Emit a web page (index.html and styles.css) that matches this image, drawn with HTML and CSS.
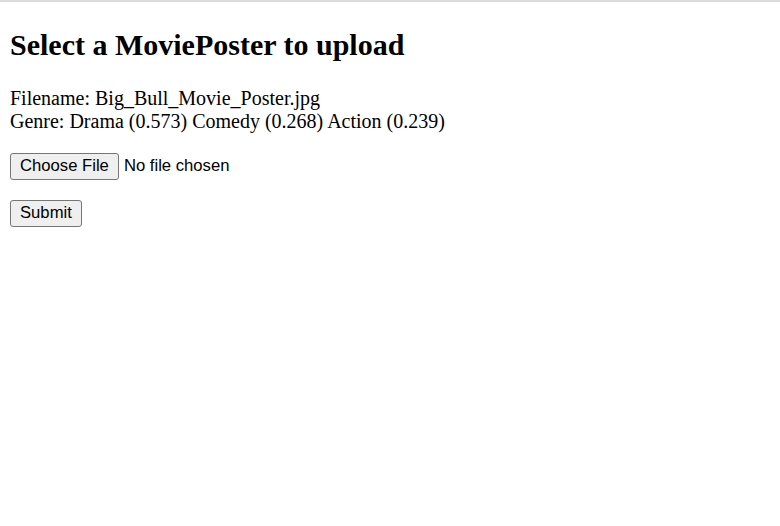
FILE: index.html
```html
<!DOCTYPE html>
<html lang="en">
<head>
<meta charset="utf-8">
<title>Upload MoviePoster</title>
<link rel="stylesheet" href="styles.css">
</head>
<body>
<div class="topline"></div>
<main class="page">
  <h2 class="title">Select a MoviePoster to upload</h2>
  <p class="result">Filename: Big_Bull_Movie_Poster.jpg<br>Genre: Drama (0.573) Comedy (0.268) Action (0.239)</p>
  <form class="form">
    <div class="file-row">
      <button type="button" class="btn">Choose File</button>
      <span class="file-name">No file chosen</span>
    </div>
    <div class="submit-row">
      <button type="submit" class="btn">Submit</button>
    </div>
  </form>
</main>
</body>
</html>
```
FILE: styles.css
```css
html, body {
  margin: 0;
  padding: 0;
  background: #ffffff;
}
.topline {
  height: 2px;
  background: #dcdce0;
}
.page {
  padding: 0 10px;
  font-family: "Liberation Serif", "Times New Roman", serif;
  font-size: 20px;
  color: #000;
}
.title {
  font-size: 30px;
  font-weight: bold;
  margin: 25.9px 0 24.9px;
}
.result {
  margin: 24.9px 0 20px;
  line-height: 23px;
}
.form {
  display: flex;
  flex-direction: column;
  align-items: flex-start;
  gap: 20px;
}
.file-row {
  display: flex;
  align-items: center;
  gap: 5px;
}
.btn {
  font-family: "Liberation Sans", Arial, sans-serif;
  font-size: 16.67px;
  color: #000;
  background: #efefef;
  border: 1px solid #767676;
  border-radius: 3px;
  height: 27px;
  padding: 0 9px;
  margin: 0;
  line-height: 1;
}
.file-name {
  font-family: "Liberation Sans", Arial, sans-serif;
  font-size: 16.67px;
}
```
